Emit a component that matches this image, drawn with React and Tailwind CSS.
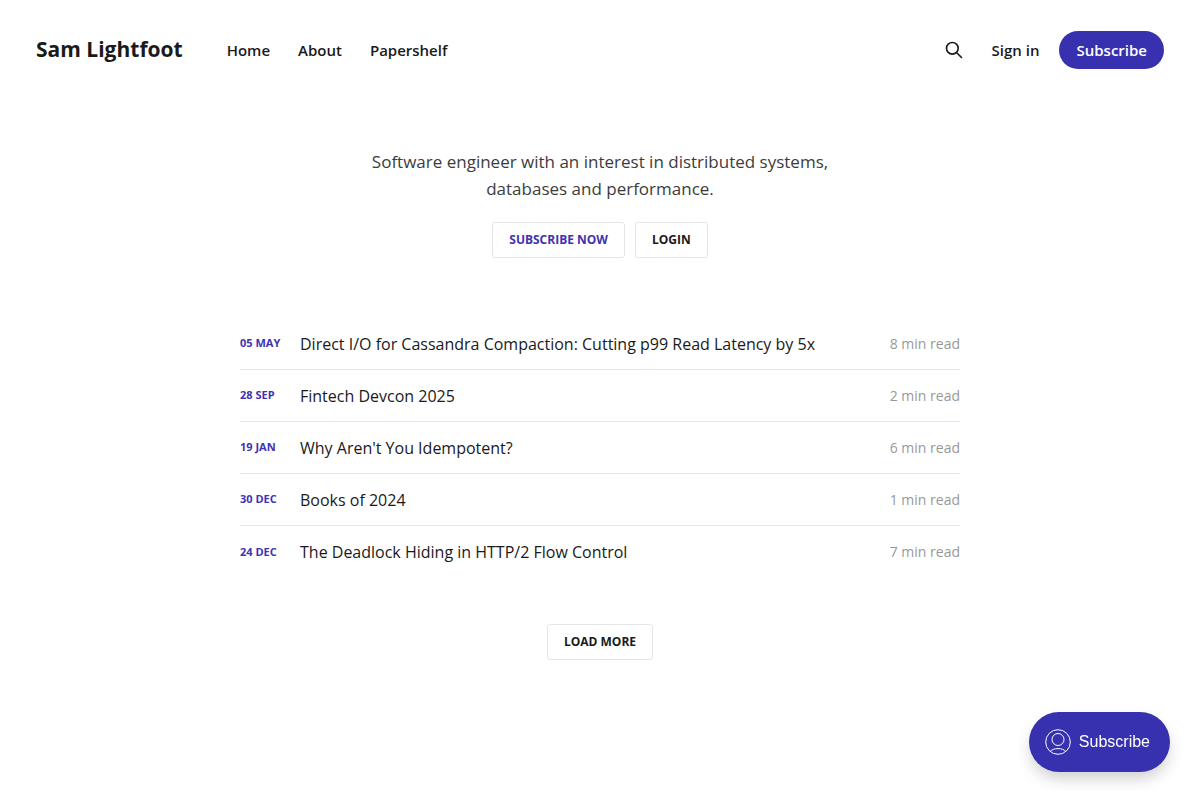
import React from 'react';

const navLinks = ['Home', 'About', 'Papershelf'];

const posts = [
  { date: '05 May', title: 'Direct I/O for Cassandra Compaction: Cutting p99 Read Latency by 5x', length: '8 min read' },
  { date: '28 Sep', title: 'Fintech Devcon 2025', length: '2 min read' },
  { date: '19 Jan', title: "Why Aren't You Idempotent?", length: '6 min read' },
  { date: '30 Dec', title: 'Books of 2024', length: '1 min read' },
  { date: '24 Dec', title: 'The Deadlock Hiding in HTTP/2 Flow Control', length: '7 min read' },
];

const SearchIcon = () => (
  <svg className="h-5 w-5" viewBox="0 0 24 24" fill="none" stroke="currentColor" strokeWidth="2" aria-hidden="true">
    <path strokeLinecap="round" strokeLinejoin="round" d="M21 21l-6-6m2-5a7 7 0 11-14 0 7 7 0 0114 0z" />
  </svg>
);

const UserIcon = () => (
  <svg className="h-[26px] w-[26px]" viewBox="0 0 26 26" fill="none" stroke="currentColor" aria-hidden="true">
    <circle cx="13" cy="13" r="12.3" />
    <circle cx="13" cy="10.5" r="6" />
    <path d="M5.2 22.4C7 20.5 9.8 19.6 13 19.6s6 .9 7.8 2.8" />
  </svg>
);

const Header = () => (
  <header className="flex h-[100px] items-center justify-between px-9 text-[15px] font-semibold">
    <div className="flex items-center">
      <a href="#" className="text-[21px] font-bold">Sam Lightfoot</a>
      <nav className="ml-11 flex gap-7">
        {navLinks.map(link => (
          <a key={link} href="#">{link}</a>
        ))}
      </nav>
    </div>
    <div className="flex items-center">
      <button type="button" aria-label="Search this site" className="mr-7">
        <SearchIcon />
      </button>
      <a href="#" className="mr-5">Sign in</a>
      <a href="#" className="flex h-[38px] items-center rounded-full bg-[#3730af] px-[17px] text-white">Subscribe</a>
    </div>
  </header>
);

const Cover = () => (
  <section className="mx-auto mt-12 flex max-w-[480px] flex-col items-center text-center">
    <p className="text-[17px] leading-[27px] text-[#3c3c3c]">
      Software engineer with an interest in distributed systems, databases and performance.
    </p>
    <div className="mt-5 flex gap-[10px] text-xs font-bold uppercase">
      <a href="#" className="flex h-9 items-center rounded-[3px] border border-[#e5e5e5] px-4 text-[#3f32b3]">Subscribe now</a>
      <a href="#" className="flex h-9 items-center rounded-[3px] border border-[#e5e5e5] px-4">Login</a>
    </div>
  </section>
);

const PostRow = ({ post }) => (
  <article className="flex h-[52px] items-center border-b border-[#e5e5e5] last:border-b-0">
    <time className="w-[60px] shrink-0 text-[11px] font-bold uppercase text-[#3f32b3]">{post.date}</time>
    <h2 className="grow text-base">
      <a href="#">{post.title}</a>
    </h2>
    <span className="ml-5 shrink-0 text-sm text-[#999999]">{post.length}</span>
  </article>
);

const App = () => {
  return (
    <div className="bg-white font-['Open_Sans',sans-serif] text-[#1a1a1a]">
      <Header />
      <main className="px-9">
        <Cover />
        <section className="mx-auto mt-[60px] max-w-[720px]">
          {posts.map(post => (
            <PostRow key={post.title} post={post} />
          ))}
        </section>
        <div className="mt-[46px] flex justify-center pb-20">
          <button type="button" className="h-9 rounded-[3px] border border-[#e5e5e5] px-4 text-xs font-bold uppercase">
            Load more
          </button>
        </div>
      </main>
      <button
        type="button"
        className="fixed right-[30px] bottom-7 flex h-[60px] items-center gap-2 rounded-full bg-[#3730af] px-4 pr-5 font-['Liberation_Sans',sans-serif] text-base text-white shadow-[0_8px_16px_-2px_rgba(0,0,0,0.2)]"
      >
        <UserIcon />
        Subscribe
      </button>
    </div>
  );
};

export default App;
